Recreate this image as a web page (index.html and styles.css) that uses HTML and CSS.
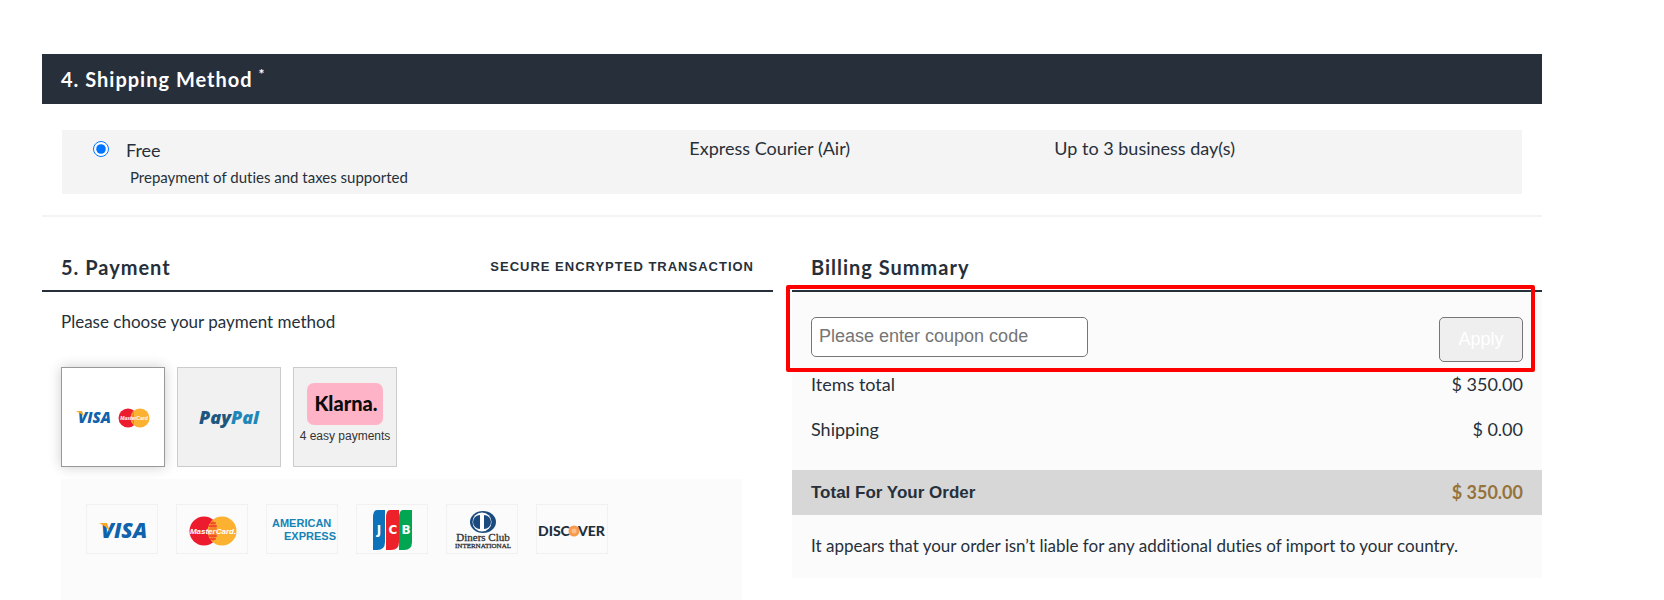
FILE: index.html
```html
<!DOCTYPE html>
<html lang="en">
<head>
  <meta charset="UTF-8">
  <meta name="viewport" content="width=device-width, initial-scale=1">
  <title>Checkout</title>
  <link rel="stylesheet" href="styles.css">
</head>
<body>

  <form class="checkout">
    <section class="shipping">
      <h2 class="bar">4. Shipping Method <sup>*</sup></h2>
      <div class="shipping-option">
        <div class="price">
          <input type="radio" id="ship_free" name="shipping" checked>
          <label for="ship_free">Free</label>
          <small>Prepayment of duties and taxes supported</small>
        </div>
        <div class="courier">Express Courier (Air)</div>
        <div class="days">Up to 3 business day(s)</div>
      </div>
    </section>

    <div class="columns">
      <section class="payment">
        <div class="title">
          <h2>5. Payment</h2>
          <span class="secure">SECURE ENCRYPTED TRANSACTION</span>
        </div>
        <p class="choose">Please choose your payment method</p>

        <div class="methods">
          <button type="button" class="method active" aria-label="Credit card">
            <svg width="76" height="24" viewBox="0 0 76 24">
              <text class="visa" x="3" y="18" font-size="15">VISA</text>
              <path d="M1 6h6l2 6q-3-4-8-6z" fill="#f7a823"/>
              <circle cx="53" cy="13" r="9.5" fill="#ed1b2e"/>
              <circle cx="65" cy="13" r="9.5" fill="#fdb131"/>
              <path d="M59 6v14q-4-7 0-14z" fill="#f5822a"/>
              <text class="mc" x="59" y="15" font-size="5">MasterCard</text>
            </svg>
          </button>
          <button type="button" class="method" aria-label="PayPal">
            <svg width="70" height="24" viewBox="0 0 70 24">
              <text class="paypal" x="5" y="19" font-size="18"><tspan fill="#1b577f">Pay</tspan><tspan fill="#1f87b8">Pal</tspan></text>
            </svg>
          </button>
          <button type="button" class="method" aria-label="Klarna, 4 easy payments">
            <svg width="76" height="42" viewBox="0 0 76 42">
              <rect width="76" height="42" rx="7" fill="#ffb3c7"/>
              <text class="klarna" x="39" y="28" font-size="20">Klarna.</text>
            </svg>
            <span>4 easy payments</span>
          </button>
        </div>

        <div class="cards">
          <div class="card">
            <svg width="70" height="48" viewBox="0 0 70 48">
              <text class="visa" x="14" y="33" font-size="21">VISA</text>
              <path d="M12 18h8l3 9q-4-6-11-9z" fill="#f7a823"/>
            </svg>
          </div>
          <div class="card">
            <svg width="70" height="48" viewBox="0 0 70 48">
              <circle cx="27" cy="26" r="14.5" fill="#ed1b2e"/>
              <circle cx="45" cy="26" r="14.5" fill="#fdb131"/>
              <path d="M36 15q-8 11 0 22q8-11 0-22z" fill="#f5822a"/>
              <path d="M32 18h7M31 21h9M31 31h9M32 34h7" stroke="#ed1b2e"/>
              <text class="mc" x="36" y="29" font-size="8">MasterCard.</text>
            </svg>
          </div>
          <div class="card">
            <svg width="70" height="48" viewBox="0 0 70 48">
              <text class="amex" x="5" y="22" font-size="11">AMERICAN</text>
              <text class="amex" x="17" y="35" font-size="11">EXPRESS</text>
            </svg>
          </div>
          <div class="card">
            <svg width="70" height="48" viewBox="0 0 70 48">
              <path d="M20 5h8v32q0 8-8 8h-4V13q0-8 4-8z" fill="#0c72ba"/>
              <path d="M33 5h9v32q0 8-8 8h-5V13q0-8 4-8z" fill="#ed2129"/>
              <path d="M46 5h9v32q0 8-8 8h-5V13q0-8 4-8z" fill="#00a651"/>
              <text class="jcb" x="22" y="29" font-size="12">J</text>
              <text class="jcb" x="36" y="29" font-size="12">C</text>
              <text class="jcb" x="49" y="29" font-size="12">B</text>
            </svg>
          </div>
          <div class="card">
            <svg width="70" height="48" viewBox="0 0 70 48">
              <ellipse cx="36" cy="17" rx="13" ry="11" fill="#1b4b7e"/>
              <circle cx="35" cy="17" r="9.5" fill="#fff"/>
              <path d="M33 10v14a7 7 0 0 1 0-14zM37 10a7 7 0 0 1 0 14z" fill="#1b4b7e"/>
              <text class="diners" x="36" y="36" font-size="11">Diners Club</text>
              <text class="diners" x="36" y="43" font-size="7">INTERNATIONAL</text>
            </svg>
          </div>
          <div class="card">
            <svg width="70" height="48" viewBox="0 0 70 48">
              <text class="discover" x="1" y="31" font-size="14">DISC</text>
              <circle cx="37" cy="26" r="5.5" fill="#f79a4d"/>
              <circle cx="37" cy="26" r="2.5" fill="#fcc08a"/>
              <text class="discover" x="41" y="31" font-size="14">VER</text>
            </svg>
          </div>
        </div>
      </section>

      <section class="billing">
        <div class="title">
          <h2>Billing Summary</h2>
        </div>
        <div class="summary">
          <div class="coupon">
            <input type="text" placeholder="Please enter coupon code" aria-label="Coupon code">
            <button type="button">Apply</button>
          </div>
          <div class="line"><span>Items total</span><span>$ 350.00</span></div>
          <div class="line"><span>Shipping</span><span>$ 0.00</span></div>
          <div class="line total"><strong>Total For Your Order</strong><b>$ 350.00</b></div>
          <p class="note">It appears that your order isn’t liable for any additional duties of import to your country.</p>
        </div>
        <div class="highlight"></div>
      </section>
    </div>
  </form>

</body>
</html>
```
FILE: styles.css
```css
* { box-sizing: border-box; }
body { margin: 0; font: 18px/24px Lato, sans-serif; font-variant-ligatures: none; color: #27303a; background: #fff; }
h2, p { margin: 0; }
svg { display: block; }

.checkout { margin: 54px 122px 0 42px; }

/* shipping */
.shipping { padding-bottom: 21px; border-bottom: 2px solid #f4f4f4; }
.bar { height: 50px; padding: 0 19px; background: #27303a; color: #fff; font-size: 20px; line-height: 50px; letter-spacing: 1px; }
.bar sup { font-size: 14px; line-height: 0; }
.shipping-option { display: grid; grid-template-columns: 5fr 3fr 4fr; height: 64px; margin: 26px 20px 0; background: #f4f4f4; }
.price { display: grid; grid-template-columns: 16px 1fr; column-gap: 17px; align-content: start; padding: 8px 0 0 31px; }
.price input { width: 16px; height: 16px; margin: 3px 0 0; }
.price small { grid-column: 2; padding: 3px 0 0 4px; font-size: 15px; line-height: 24px; }
.courier, .days { padding: 6px 19px; }

.columns { display: grid; grid-template-columns: 731fr 750fr; column-gap: 19px; align-items: start; }
.title { display: flex; justify-content: space-between; align-items: center; height: 75px; padding: 27px 19px 0; border-bottom: 2px solid #27303a; }
.title h2 { font-size: 20px; line-height: 26px; letter-spacing: 1px; }
.secure { font: bold 13px/20px "Liberation Sans", Arial, sans-serif; letter-spacing: 1px; }

/* payment */
.choose { padding: 18px 19px 33px; font-size: 17px; }
.methods { display: flex; gap: 12px; padding: 0 19px; }
.method { display: flex; flex-direction: column; align-items: center; justify-content: center; width: 104px; height: 100px; padding: 0; border: 1px solid #ccc; background: #f1f1f1; }
.method.active { border-color: #999; background: #fff; box-shadow: 0 0 12px rgba(0, 0, 0, .2); }
.method span { padding: 2px 0 6px; font: 12px/18px "Liberation Sans", Arial, sans-serif; color: #333; white-space: nowrap; }
.cards { display: flex; gap: 18px; margin: 12px 31px 0 19px; padding: 25px 25px 46px; background: #fbfbfb; }
.card { width: 72px; height: 50px; border: 1px solid #f1f1f1; }

.visa { font-family: "Open Sans", sans-serif; font-weight: 800; font-style: italic; fill: #0f62ac; }
.mc { font-family: "Liberation Sans", sans-serif; font-weight: bold; font-style: italic; fill: #fff; text-anchor: middle; }
.paypal { font-family: "Open Sans", sans-serif; font-weight: 800; font-style: italic; }
.klarna { font-family: Lato, sans-serif; font-weight: 900; fill: #0b0b0b; text-anchor: middle; }
.amex { font-family: "Liberation Sans", sans-serif; font-weight: bold; fill: #1683b5; }
.jcb { font-family: "DejaVu Sans", sans-serif; font-weight: bold; fill: #fff; text-anchor: middle; }
.diners { font-family: "Liberation Serif", serif; fill: #333; stroke: #333; stroke-width: .3px; text-anchor: middle; }
.discover { font-family: Lato, sans-serif; font-weight: 900; fill: #1d2f3e; }

/* billing */
.billing { position: relative; }
.summary { padding-top: 25px; background: #fbfbfb; }
.coupon { display: flex; justify-content: space-between; align-items: flex-start; padding: 0 19px; }
.coupon input { width: 277px; height: 40px; padding: 0 7px 2px; border: 1px solid #767676; border-radius: 5px; font: 18px "Liberation Sans", Arial, sans-serif; }
.coupon button { width: 84px; height: 45px; padding: 0; border: 1px solid #767676; border-radius: 5px; background: #efefef; color: #fff; font: 18px "Liberation Sans", Arial, sans-serif; }
.line { display: flex; justify-content: space-between; padding: 0 19px; line-height: 45px; }
.total { margin-top: 18px; background: #d7d7d7; }
.total strong { font-family: "Liberation Sans", Arial, sans-serif; font-size: 17px; }
.total b { color: #96733c; }
.note { padding: 19px 19px 20px; font-size: 17px; }
.highlight { position: absolute; top: 68px; left: -6px; right: 7px; height: 87px; border: 4px solid #f00; border-radius: 2px; pointer-events: none; }
```
